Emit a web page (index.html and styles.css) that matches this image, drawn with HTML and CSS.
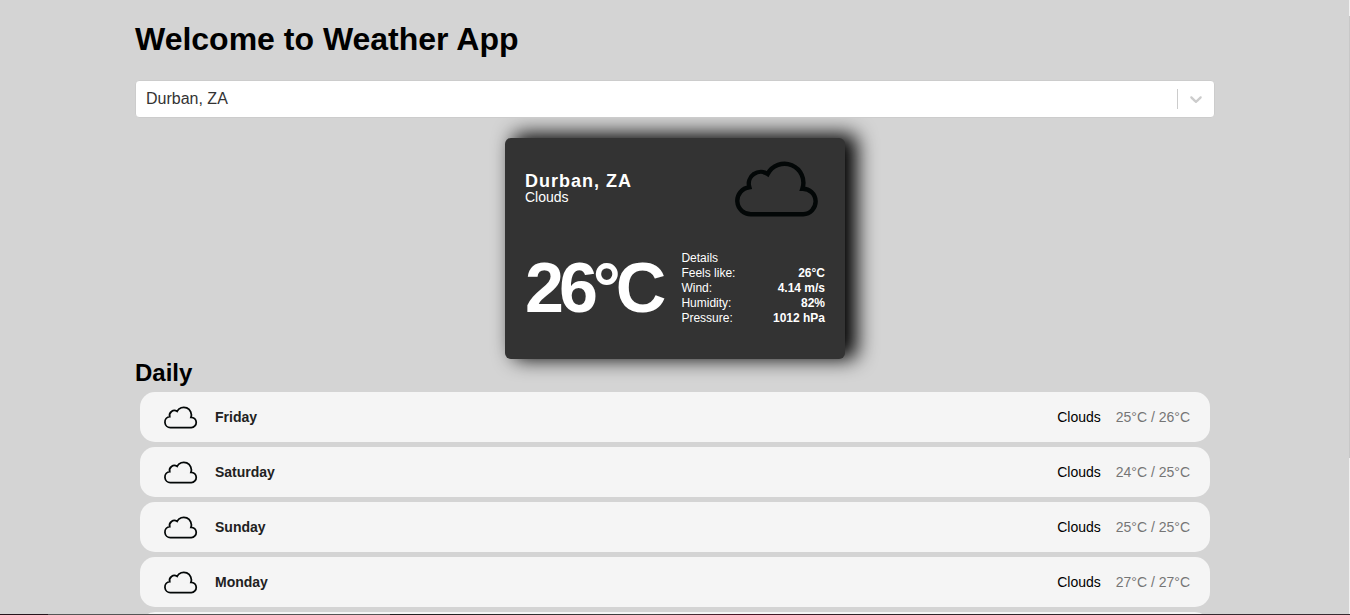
FILE: index.html
```
<!DOCTYPE html>
<html lang="en">
<head>
<meta charset="utf-8">
<title>Weather App</title>
<link rel="stylesheet" href="styles.css">
</head>
<body>
<svg class="symbols" aria-hidden="true">
  <symbol id="cloud" viewBox="5 -12 100 100">
    <path d="M31.300 64.300A13.600 13.600 0 0 1 29.300 37.200A12 12 0 0 1 47.700 24A18.900 18.900 0 0 1 82.400 38.700A12.800 12.800 0 0 1 83.200 64.300Z" fill="none" stroke="#030707" stroke-width="4.400"/>
  </symbol>
</svg>
<main class="container">
  <h1 class="title">Welcome to Weather App</h1>
  <div class="search">
    <select class="search-input" aria-label="City">
      <option>Durban, ZA</option>
    </select>
    <span class="search-indicator">
      <svg class="chevron" viewBox="0 0 20 20" aria-hidden="true"><path d="M4.516 7.548c0.436-0.446 1.043-0.481 1.576 0l3.908 3.747 3.908-3.747c0.533-0.481 1.141-0.446 1.574 0 0.436 0.445 0.408 1.197 0 1.615-0.406 0.418-4.695 4.502-4.695 4.502-0.217 0.223-0.502 0.335-0.787 0.335s-0.570-0.112-0.789-0.335c0 0-4.287-4.084-4.695-4.502s-0.436-1.170 0-1.615z"/></svg>
    </span>
  </div>
  <section class="weather">
    <div class="top">
      <div>
        <p class="city">Durban, ZA</p>
        <p class="description">Clouds</p>
      </div>
      <svg class="weather-icon" role="img" aria-label="Cloudy"><use href="#cloud"/></svg>
    </div>
    <div class="bottom">
      <p class="temperature">26°C</p>
      <div class="details">
        <p>Details</p>
        <div class="parameter"><span>Feels like:</span><b>26°C</b></div>
        <div class="parameter"><span>Wind:</span><b>4.14 m/s</b></div>
        <div class="parameter"><span>Humidity:</span><b>82%</b></div>
        <div class="parameter"><span>Pressure:</span><b>1012 hPa</b></div>
      </div>
    </div>
  </section>
  <h2 class="subtitle">Daily</h2>
  <div class="forecast">
    <button type="button" class="daily-item"><svg class="icon-small" aria-hidden="true"><use href="#cloud"/></svg><span class="day">Friday</span><span>Clouds</span><span class="min-max">25°C / 26°C</span></button>
    <button type="button" class="daily-item"><svg class="icon-small" aria-hidden="true"><use href="#cloud"/></svg><span class="day">Saturday</span><span>Clouds</span><span class="min-max">24°C / 25°C</span></button>
    <button type="button" class="daily-item"><svg class="icon-small" aria-hidden="true"><use href="#cloud"/></svg><span class="day">Sunday</span><span>Clouds</span><span class="min-max">25°C / 25°C</span></button>
    <button type="button" class="daily-item"><svg class="icon-small" aria-hidden="true"><use href="#cloud"/></svg><span class="day">Monday</span><span>Clouds</span><span class="min-max">27°C / 27°C</span></button>
    <div class="daily-item"></div>
  </div>
</main>
<div class="scroll-edge"></div>
<div class="bottom-edge"></div>
</body>
</html>
```

FILE: styles.css
```
* { box-sizing: border-box; }

body {
  margin: 0;
  height: 100vh;
  overflow: hidden;
  background: #d4d4d4;
  color: #000;
  font-family: Arial, "Liberation Sans", sans-serif;
}

h1, h2, p { margin: 0; }

.symbols { display: none; }

.container {
  max-width: 1080px;
  margin: 0 auto;
  padding-top: 20px;
}

.title {
  font-size: 32px;
  line-height: 38px;
  margin-bottom: 22px;
}

.search {
  display: grid;
  align-items: center;
}

.search-input {
  grid-area: 1 / 1;
  appearance: none;
  width: 100%;
  height: 38px;
  padding: 0 48px 2px 10px;
  border: 1px solid #ccc;
  border-radius: 4px;
  background: #fff;
  color: #333;
  font: inherit;
  font-size: 16px;
}

.search-indicator {
  grid-area: 1 / 1;
  justify-self: end;
  display: flex;
  align-items: center;
  height: 20px;
  padding: 0 9px 0 8px;
  border-left: 1px solid #ccc;
  pointer-events: none;
}

.chevron {
  width: 20px;
  height: 20px;
  fill: #ccc;
}

.weather {
  width: 340px;
  margin: 20px auto 0;
  padding: 0 20px 33px;
  border-radius: 6px;
  background: #333;
  color: #fff;
  box-shadow: 10px -2px 20px 2px #000;
}

.top, .bottom, .parameter {
  display: flex;
  justify-content: space-between;
  align-items: center;
}

.city {
  font-size: 18px;
  font-weight: 700;
  line-height: 18px;
  letter-spacing: 1px;
}

.description {
  font-size: 14px;
  line-height: 14px;
}

.weather-icon {
  width: 100px;
  height: 100px;
}

.bottom { padding-top: 13px; }

.temperature {
  font-size: 70px;
  font-weight: 700;
  line-height: 75px;
  letter-spacing: -5px;
}

.details {
  flex: 1;
  padding-left: 20px;
  font-size: 12px;
  line-height: 15px;
}

.subtitle {
  font-size: 24px;
  line-height: 28px;
}

.forecast {
  display: grid;
  gap: 5px;
  padding: 5px;
}

.daily-item {
  display: flex;
  align-items: center;
  width: 100%;
  height: 50px;
  padding: 5px 20px;
  border: 0;
  border-radius: 15px;
  background: #f5f5f5;
  color: #000;
  font: inherit;
  font-size: 14px;
}

.icon-small {
  width: 40px;
  height: 40px;
}

.day {
  flex: 1;
  margin-left: 15px;
  color: #212121;
  font-weight: 700;
  text-align: left;
}

.min-max {
  margin-left: 15px;
  color: #757575;
}

.scroll-edge {
  position: fixed;
  top: 0;
  right: 0;
  bottom: 0;
  width: 1px;
  background: linear-gradient(#f1f1f1 16px, #c8c8c8 16px 458px, #f1f1f1 458px);
}

.bottom-edge {
  position: fixed;
  right: 0;
  bottom: 0;
  left: 0;
  height: 1px;
  background: linear-gradient(90deg, #25151b 48px, #555 48px 390px, #222 390px 450px, #444 650px, #4a1525 740px, #2d2529 860px, #382a30);
}
```
